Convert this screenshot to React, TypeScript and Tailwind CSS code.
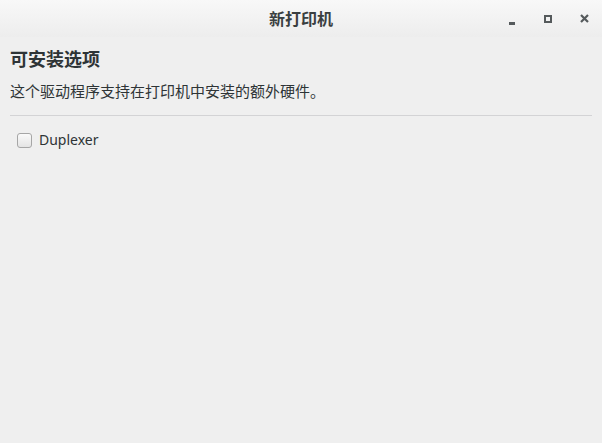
export default function App() {
  return (
    <div
      className="flex h-[443px] w-[602px] flex-col overflow-hidden bg-[#efefef] text-[#2e3436]"
      style={{ fontFamily: '"Noto Sans", "Noto Sans CJK SC", sans-serif' }}
    >
      {/* Title bar */}
      <div className="relative flex h-[37px] shrink-0 items-center justify-center bg-gradient-to-b from-[#f8f8f8] to-[#ededed]">
        <span className="text-[16px] font-bold leading-none text-[#3a3f41]">新打印机</span>
        <div className="absolute right-0 top-0 flex h-full items-center">
          <button className="flex h-full w-[36px] items-center justify-center">
            <span className="mt-[10px] block h-[3px] w-[6px] bg-[#555a5c]" />
          </button>
          <button className="flex h-full w-[36px] items-center justify-center">
            <span className="block h-[8px] w-[8px] border-2 border-[#555a5c]" />
          </button>
          <button className="flex h-full w-[36px] items-center justify-center">
            <svg width="9" height="9" viewBox="0 0 9 9">
              <path d="M1 1 L8 8 M8 1 L1 8" stroke="#555a5c" strokeWidth="2.2" />
            </svg>
          </button>
        </div>
      </div>

      {/* Content */}
      <div className="flex flex-col px-[10px] pt-[10px]">
        <h1 className="text-[18px] font-bold leading-[24px]">可安装选项</h1>
        <p className="mt-[10px] text-[15px] leading-[20px]">这个驱动程序支持在打印机中安装的额外硬件。</p>
        <div className="mt-[14px] h-px bg-[#d3d3d5]" />
        <label className="mt-[15px] flex items-center gap-[7px] pl-[7px]">
          <span className="block h-[15px] w-[15px] rounded-[3px] border border-[#a6a6a6] bg-gradient-to-b from-[#fafafa] to-[#e4e4e4]" />
          <span className="text-[14px] leading-[18px]">Duplexer</span>
        </label>
      </div>
    </div>
  );
}
